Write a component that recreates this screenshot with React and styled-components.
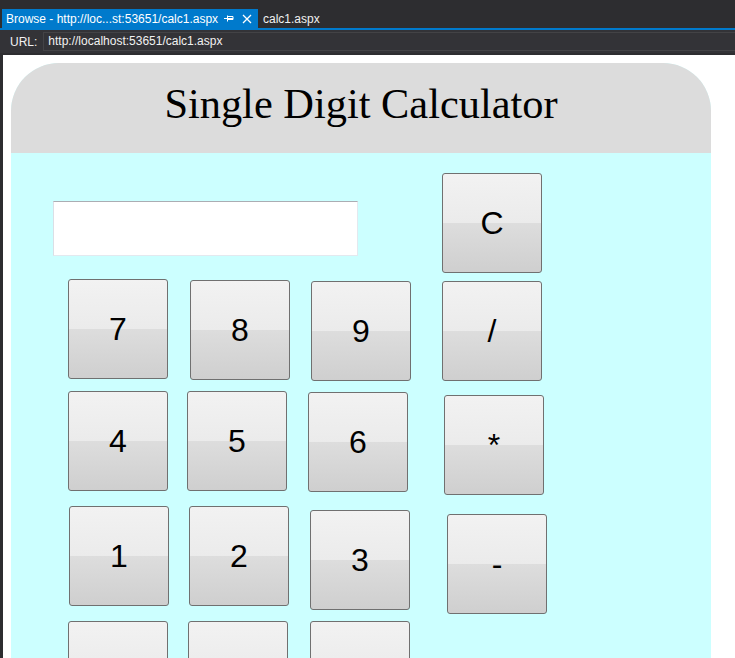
import React from "react";
import styled, { createGlobalStyle } from "styled-components";

const GlobalStyle = createGlobalStyle`
  html, body {
    margin: 0;
    padding: 0;
    background: #2d2d30;
    overflow: hidden;
  }
`;

const Window = styled.div`
  width: 735px;
  height: 658px;
  display: flex;
  flex-direction: column;
  background: #2d2d30;
  font-family: "Segoe UI", "Liberation Sans", sans-serif;
  overflow: hidden;
`;

const TabStrip = styled.div`
  display: flex;
  align-items: flex-end;
  height: 28px;
  padding-left: 2px;
  border-bottom: 2px solid #007acc;
  flex: none;
`;

const ActiveTab = styled.div`
  display: flex;
  align-items: center;
  width: 256px;
  height: 19px;
  box-sizing: border-box;
  padding: 0 6px 0 4px;
  background: #007acc;
  color: #ffffff;
  font-size: 12px;
  white-space: nowrap;
`;

const TabTitle = styled.span`
  flex: 1;
  overflow: hidden;
`;

const TabIcon = styled.svg`
  flex: none;
  margin-left: ${(p) => p.$gap}px;
`;

const Tab = styled.div`
  display: flex;
  align-items: center;
  height: 19px;
  padding-left: 5px;
  color: #f1f1f1;
  font-size: 12px;
`;

const Toolbar = styled.div`
  display: flex;
  align-items: center;
  height: 23px;
  padding-left: 10px;
  background: #333337;
  flex: none;
`;

const UrlLabel = styled.span`
  color: #f1f1f1;
  font-size: 12px;
`;

const UrlBox = styled.div`
  flex: 1;
  height: 19px;
  margin-left: 6px;
  box-sizing: border-box;
  border: 1px solid #434346;
  border-right: none;
  background: #333337;
  color: #f1f1f1;
  font-size: 12px;
  line-height: 17px;
  padding-left: 4px;
`;

const Page = styled.div`
  flex: 1;
  margin: 2px 0 0 3px;
  padding: 8px;
  background: #ffffff;
  overflow: hidden;
`;

const Calculator = styled.div`
  width: 700px;
  background: #ccffff;
  border-radius: 48px 48px 0 0;
  padding-bottom: 40px;
`;

const Header = styled.div`
  height: 90px;
  box-sizing: border-box;
  padding-top: 17px;
  background: #dcdcdc;
  border-radius: 48px 48px 0 0;
  text-align: center;
`;

const Title = styled.h1`
  margin: 0;
  font-family: "Liberation Serif", "Times New Roman", serif;
  font-size: 42.4px;
  font-weight: normal;
  line-height: 48px;
  color: #000;
`;

const Keypad = styled.div`
  padding-top: 20px;
`;

const Row = styled.div`
  display: flex;
  align-items: flex-start;
  margin-top: ${(p) => p.$mt}px;
`;

const Display = styled.input`
  flex: none;
  width: 305px;
  height: 55px;
  margin: 28px 0 0 42px;
  box-sizing: border-box;
  border: 1px solid #e3e9ef;
  border-top-color: #abadb3;
  border-left-color: #dbdfe6;
  background: #ffffff;
  padding: 0 4px;
  font-family: "Liberation Sans", Arial, sans-serif;
  font-size: 24px;
  outline: none;
`;

const Key = styled.button`
  flex: none;
  width: 100px;
  height: 100px;
  margin-left: ${(p) => p.$ml}px;
  margin-top: ${(p) => p.$mt}px;
  box-sizing: border-box;
  padding: 0;
  border: 1px solid #707070;
  border-radius: 3px;
  background: linear-gradient(#f2f2f2 0%, #ebebeb 50%, #dddddd 50%, #cfcfcf 100%);
  color: #000;
  font-family: "Liberation Sans", Arial, sans-serif;
  font-size: 32px;
  display: flex;
  align-items: center;
  justify-content: center;
`;

// the last row runs past the bottom of the window, its labels are not seen
const rows = [
  {
    mt: 6,
    keys: [
      { id: "k7", label: "7", ml: 57, mt: 0 },
      { id: "k8", label: "8", ml: 22, mt: 1 },
      { id: "k9", label: "9", ml: 21, mt: 2 },
      { id: "div", label: "/", ml: 31, mt: 2 },
    ],
  },
  {
    mt: 10,
    keys: [
      { id: "k4", label: "4", ml: 57, mt: 0 },
      { id: "k5", label: "5", ml: 19, mt: 0 },
      { id: "k6", label: "6", ml: 21, mt: 1 },
      { id: "mul", label: "*", ml: 36, mt: 4 },
    ],
  },
  {
    mt: 11,
    keys: [
      { id: "k1", label: "1", ml: 58, mt: 0 },
      { id: "k2", label: "2", ml: 20, mt: 0 },
      { id: "k3", label: "3", ml: 21, mt: 4 },
      { id: "sub", label: "-", ml: 37, mt: 8 },
    ],
  },
  {
    mt: 7,
    keys: [
      { id: "k0", label: "", ml: 57, mt: 0 },
      { id: "add", label: "", ml: 20, mt: 0 },
      { id: "eq", label: "", ml: 22, mt: 0 },
    ],
  },
];

export default function App() {
  return (
    <Window>
      <GlobalStyle />
      <TabStrip>
        <ActiveTab>
          <TabTitle>Browse - http://loc...st:53651/calc1.aspx</TabTitle>
          <TabIcon $gap={0} width="10" height="9" viewBox="0 0 10 9" fill="none" stroke="#fff" strokeWidth="1">
            <path d="M0 4.5h3.5M3.5 1.5v6M3.5 2.5h5.5v3h-5.5M3.5 4.5h5.5" />
          </TabIcon>
          <TabIcon $gap={8} width="10" height="10" viewBox="0 0 10 10" fill="none" stroke="#fff" strokeWidth="1.3">
            <path d="M1 1l8 8M9 1l-8 8" />
          </TabIcon>
        </ActiveTab>
        <Tab>calc1.aspx</Tab>
      </TabStrip>
      <Toolbar>
        <UrlLabel>URL:</UrlLabel>
        <UrlBox>http://localhost:53651/calc1.aspx</UrlBox>
      </Toolbar>
      <Page>
        <Calculator>
          <Header>
            <Title>Single Digit Calculator</Title>
          </Header>
          <Keypad>
            <Row $mt={0}>
              <Display type="text" readOnly />
              <Key $ml={84} $mt={0}>C</Key>
            </Row>
            {rows.map((row, i) => (
              <Row $mt={row.mt} key={i}>
                {row.keys.map((k) => (
                  <Key $ml={k.ml} $mt={k.mt} key={k.id}>
                    {k.label}
                  </Key>
                ))}
              </Row>
            ))}
          </Keypad>
        </Calculator>
      </Page>
    </Window>
  );
}
